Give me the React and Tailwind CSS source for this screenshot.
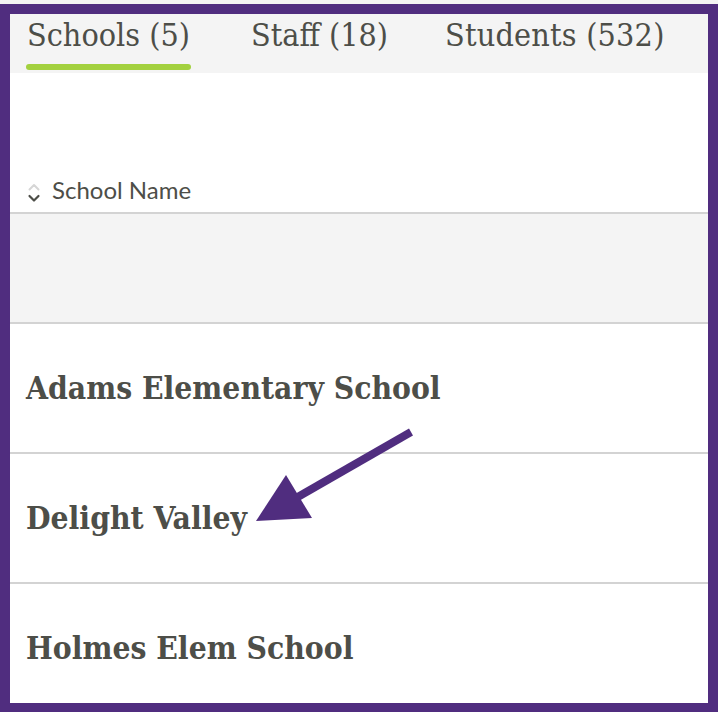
import React from "react";

const slab = "font-['DejaVu_Serif',serif] [font-stretch:condensed]";

function SortIcon() {
  return (
    <svg width="16" height="24" viewBox="0 0 16 24" className="shrink-0">
      <path d="M3.5 8.5 L8 4 L12.5 8.5" fill="none" stroke="#d6d6d6" strokeWidth="2" strokeLinecap="round" strokeLinejoin="round" />
      <path d="M3.5 15 L8 19.5 L12.5 15" fill="none" stroke="#4d4e48" strokeWidth="2.2" strokeLinecap="round" strokeLinejoin="round" />
    </svg>
  );
}

export default function App() {
  const rows = ["Adams Elementary School", "Delight Valley", "Holmes Elem School"];
  return (
    <div className="w-[718px] h-[712px] bg-[#f3f3f3] pt-[4px]">
      <div className="relative h-[708px] border-[#502d7f] border-t-[10px] border-l-[10px] border-r-[10px] border-b-[9px] bg-white overflow-hidden">
        <div className="h-[59px] bg-[#f4f4f4] flex items-start text-[#4d4e48] text-[32px]">
          <div className={`${slab} ml-[16px] flex flex-col items-stretch`}>
            <span className="leading-none pt-[5px] px-[1px]">Schools (5)</span>
            <span className="mt-[13px] h-[6px] w-full rounded-full bg-[#a3d13f]" />
          </div>
          <span className={`${slab} leading-none pt-[5px] ml-[60px]`}>Staff (18)</span>
          <span className={`${slab} leading-none pt-[5px] ml-[57px] tracking-[0.2px]`}>Students (532)</span>
        </div>
        <div className="h-[139px] flex items-end pb-[7px] pl-[16px] gap-[10px] text-[#4d4e48]">
          <SortIcon />
          <span className="font-['Lato',sans-serif] text-[24px] leading-none pb-[3px]">School Name</span>
        </div>
        <div className="h-[110px] border-t-2 border-[#d3d3d3] bg-[#f4f4f4]" />
        {rows.map((r) => (
          <div key={r} className="h-[130px] shrink-0 border-t-2 border-[#d3d3d3] flex items-center pl-[16px]">
            <span className={`${slab} font-bold text-[#4d4e48] text-[31.5px] leading-none`}>{r}</span>
          </div>
        ))}
        <svg className="absolute left-0 top-0 pointer-events-none" width="698" height="700" viewBox="10 14 698 700">
          <line x1="411" y1="432" x2="296" y2="498" stroke="#502d7f" strokeWidth="8" />
          <polygon points="256,521 286,475 312,518" fill="#502d7f" />
        </svg>
      </div>
    </div>
  );
}
